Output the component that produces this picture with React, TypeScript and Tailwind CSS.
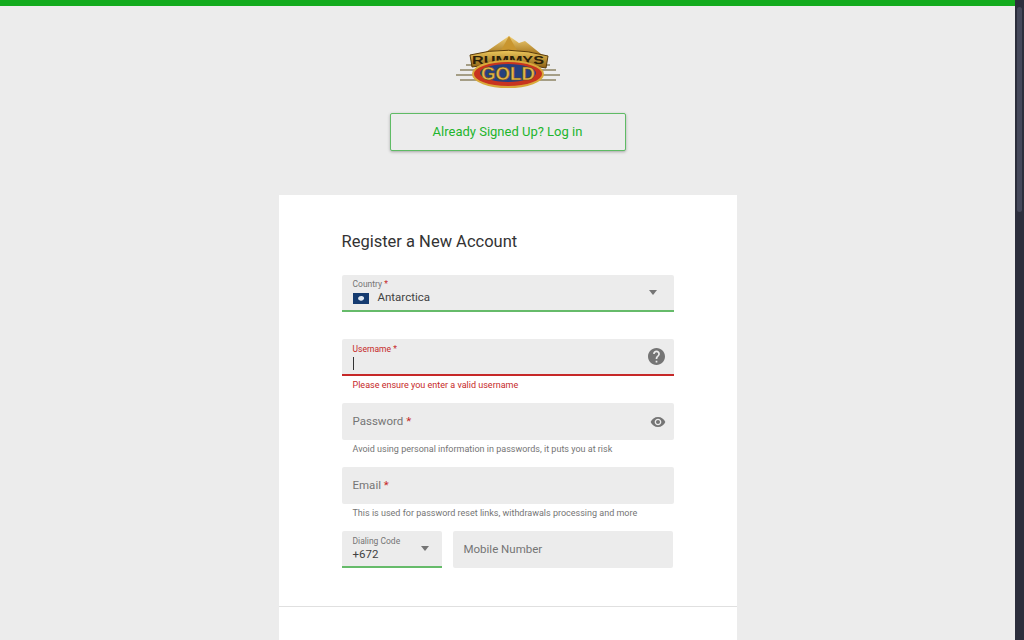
import React from "react";

const Caret = () => (
  <svg width="10" height="5" viewBox="0 0 10 5" className="shrink-0">
    <path d="M1 0h8L5 5z" fill="#757575" />
  </svg>
);

const Star = () => <span className="text-[#c62828]">*</span>;

const Logo = () => (
  <svg width="110" height="58" viewBox="0 0 110 58">
    <defs>
      <linearGradient id="pyr" x1="0" x2="0" y1="0" y2="1">
        <stop offset="0" stopColor="#f2d27a" />
        <stop offset="1" stopColor="#a8781e" />
      </linearGradient>
      <linearGradient id="band" x1="0" x2="0" y1="0" y2="1">
        <stop offset="0" stopColor="#f0c95c" />
        <stop offset="1" stopColor="#8a5f14" />
      </linearGradient>
    </defs>
    <path d="M30 21 L56 3 L66 10 L72 8 L88 21 Z" fill="url(#pyr)" />
    <path d="M56 3 L66 21 L46 21 Z" fill="#c9962f" />
    <g stroke="#8d8464" strokeWidth="1.4">
      <path d="M13 32h16M7 37h20M3 42h24M7 47h22" />
      <path d="M81 32h16M83 37h20M83 42h24M81 47h22" />
    </g>
    <path d="M17 22 Q55 12 95 23 L93 35 Q55 27 19 34 Z" fill="url(#band)" stroke="#5b3c0c" strokeWidth="1" />
    <text x="55" y="31" textAnchor="middle" fontFamily="Liberation Sans, sans-serif" fontWeight="700" fontSize="11.5" fill="#2b2008" textLength="72" lengthAdjust="spacingAndGlyphs">
      RUMMYS
    </text>
    <ellipse cx="55" cy="41" rx="35" ry="13" fill="#c8341f" stroke="#d9a93a" strokeWidth="2" />
    <ellipse cx="55" cy="40" rx="28" ry="9" fill="#26407f" />
    <text x="55" y="47" textAnchor="middle" fontFamily="Liberation Sans, sans-serif" fontWeight="700" fontSize="19" fill="#e3b64a" stroke="#6d4a0e" strokeWidth="0.5" textLength="54" lengthAdjust="spacingAndGlyphs">
      GOLD
    </text>
  </svg>
);

const Helper = ({ children, error }: { children: React.ReactNode; error?: boolean }) => (
  <div className={`h-[27px] pl-[11px] pt-[4px] text-[9px] leading-[11px] ${error ? "text-[#c62828]" : "text-[#757575]"}`}>
    {children}
  </div>
);

export default function App() {
  return (
    <div className="flex h-[640px] overflow-hidden bg-[#ececec] font-['Roboto',sans-serif]">
      <div className="flex min-w-0 flex-1 flex-col">
        <div className="h-[6px] shrink-0 bg-[#14ab1e]" />
        <div className="flex flex-col items-center">
          <div className="mt-[27px] flex h-[58px] items-center justify-center">
            <Logo />
          </div>
          <button
            type="button"
            className="mt-[22px] flex h-[38px] w-[236px] items-center justify-center rounded-[2px] border border-[#5fbb65] bg-[#ececec] text-[13px] text-[#22b52c] shadow-[0_1px_3px_rgba(0,0,0,0.3)]"
          >
            Already Signed Up? Log in
          </button>
          <div className="mt-[44px] w-[458px] bg-white">
            <div className="px-[63px] pb-[38px] pt-[36px]">
              <h1 className="h-[22px] text-[16.5px] leading-[22px] text-[#333333]">Register a New Account</h1>
              <div className="mt-[22px] flex h-[37px] w-[332px] items-center rounded-t-[2px] border-b-2 border-[#66bb6a] bg-[#ececec] pl-[11px] pr-[16px]">
                <div className="min-w-0 flex-1">
                  <div className="h-[11px] text-[8.5px] leading-[11px] text-[#757575]">
                    Country <Star />
                  </div>
                  <div className="flex h-[16px] items-center gap-[9px] text-[11.5px] text-[#424242]">
                    <svg width="16" height="11" viewBox="0 0 16 11">
                      <rect width="16" height="11" fill="#153b70" />
                      <path d="M5 5 Q6 2.5 9 3 Q11.5 3.5 11 6 Q9.5 8.5 7 7.5 Q5 7 5 5z" fill="#dfe8f2" />
                    </svg>
                    Antarctica
                  </div>
                </div>
                <Caret />
              </div>
              <div className="mt-[27px] flex h-[37px] w-[332px] items-center rounded-t-[2px] border-b-2 border-[#c62828] bg-[#ececec] pl-[11px] pr-[9px]">
                <div className="min-w-0 flex-1">
                  <div className="h-[11px] text-[8.5px] leading-[11px] text-[#c62828]">
                    Username <Star />
                  </div>
                  <div className="mt-[2px] h-[13px] w-px bg-[#333333]" />
                </div>
                <svg width="17" height="17" viewBox="2 2 20 20">
                  <path
                    fill="#757575"
                    d="M12 2C6.48 2 2 6.48 2 12s4.48 10 10 10 10-4.48 10-10S17.52 2 12 2zm1 17h-2v-2h2v2zm2.07-7.75l-.9.92C13.45 12.9 13 13.5 13 15h-2v-.5c0-1.1.45-2.1 1.17-2.83l1.24-1.26c.37-.36.59-.86.59-1.41 0-1.1-.9-2-2-2s-2 .9-2 2H8c0-2.21 1.79-4 4-4s4 1.79 4 4c0 .88-.36 1.68-.93 2.25z"
                  />
                </svg>
              </div>
              <Helper error>Please ensure you enter a valid username</Helper>
              <div className="flex h-[37px] w-[332px] items-center rounded-[2px] bg-[#ececec] pl-[11px] pr-[8px] text-[11.5px] text-[#757575]">
                <div className="flex-1">
                  Password <Star />
                </div>
                <svg width="16" height="16" viewBox="0 0 24 24">
                  <path
                    fill="#757575"
                    d="M12 4.5C7 4.5 2.73 7.61 1 12c1.73 4.39 6 7.5 11 7.5s9.27-3.11 11-7.5c-1.73-4.39-6-7.5-11-7.5zM12 17c-2.76 0-5-2.24-5-5s2.24-5 5-5 5 2.24 5 5-2.24 5-5 5zm0-8c-1.66 0-3 1.34-3 3s1.34 3 3 3 3-1.34 3-3-1.34-3-3-3z"
                  />
                </svg>
              </div>
              <Helper>Avoid using personal information in passwords, it puts you at risk</Helper>
              <div className="flex h-[37px] w-[332px] items-center rounded-[2px] bg-[#ececec] pl-[11px] text-[11.5px] text-[#757575]">
                <div>
                  Email <Star />
                </div>
              </div>
              <Helper>This is used for password reset links, withdrawals processing and more</Helper>
              <div className="flex w-[332px] items-start">
                <div className="flex h-[37px] w-[100px] shrink-0 items-center rounded-t-[2px] border-b-2 border-[#66bb6a] bg-[#ececec] pl-[11px] pr-[12px]">
                  <div className="flex-1">
                    <div className="h-[11px] text-[8.5px] leading-[11px] text-[#757575]">Dialing Code</div>
                    <div className="h-[15px] text-[11.5px] leading-[15px] text-[#424242]">+672</div>
                  </div>
                  <Caret />
                </div>
                <div className="ml-[11px] flex h-[37px] w-[220px] items-center rounded-[2px] bg-[#ececec] pl-[11px] text-[11.5px] text-[#757575]">
                  Mobile Number
                </div>
              </div>
            </div>
            <div className="h-px bg-[#e0e0e0]" />
            <div className="h-[60px]" />
          </div>
        </div>
      </div>
      <div className="flex w-[9px] shrink-0 flex-col items-center bg-[#2c2e3c] py-[7px]">
        <div className="h-[205px] w-[5px] rounded-full bg-[#45485a]" />
      </div>
    </div>
  );
}
